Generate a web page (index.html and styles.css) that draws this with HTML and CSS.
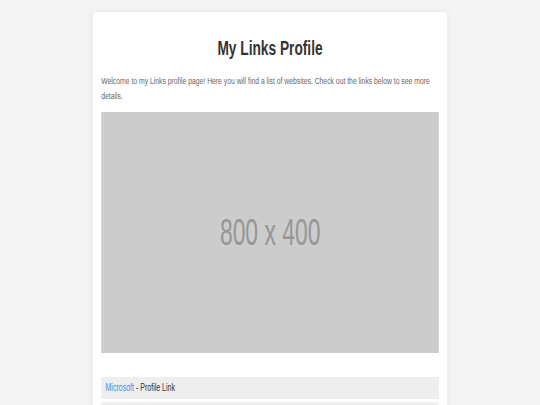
FILE: index.html
```html
<!DOCTYPE html>
<html>
<head>
    <title>My Links Profile</title>
    <link rel="stylesheet" href="styles.css">
</head>
<body>
    <div class="page">
        <div class="container">
            <h1>My Links Profile</h1>
            <p class="intro">Welcome to my Links profile page! Here you will find a list of websites. Check out the links below to see more details.</p>
            <div class="banner"><span>800 x 400</span></div>
            <ul class="links">
                <li><a href="#">Microsoft</a> - Profile Link</li>
                <li><a href="#">Google</a> - Profile Link</li>
                <li><a href="#">GitHub</a> - Profile Link</li>
            </ul>
        </div>
    </div>
</body>
</html>
```

FILE: styles.css
```css
html, body {
    margin: 0;
    overflow: hidden;
    background-color: #f3f3f3;
}

body {
    font-family: "Liberation Sans", Arial, sans-serif;
}

.page {
    width: 768px;
    padding-top: 12px;
    transform: scaleX(0.703125);
    transform-origin: 0 0;
}

.container {
    width: 480px;
    margin: 0 auto;
    padding: 24px 12px 20px;
    background-color: #fff;
    border-radius: 4px;
    box-shadow: 0 0 6px rgba(0, 0, 0, 0.06);
}

h1 {
    margin: 0 0 13px;
    color: #333;
    font-size: 19.5px;
    line-height: 24px;
    text-align: center;
}

.intro {
    margin: 0 0 9px;
    color: #666;
    font-size: 9.7px;
    line-height: 15px;
}

.banner {
    height: 241px;
    display: flex;
    align-items: center;
    justify-content: center;
    background-color: #ccc;
    color: #969696;
    font-size: 37px;
}

.banner span {
    display: inline-block;
    transform: scaleX(0.88);
}

.links {
    list-style: none;
    margin: 24px 0 0;
    padding: 0;
}

.links li {
    margin-bottom: 3px;
    padding: 5px 6px;
    background-color: #eee;
    color: #333;
    font-size: 10px;
    line-height: 12px;
}

.links a {
    color: #3a8ee6;
    text-decoration: none;
}
```
